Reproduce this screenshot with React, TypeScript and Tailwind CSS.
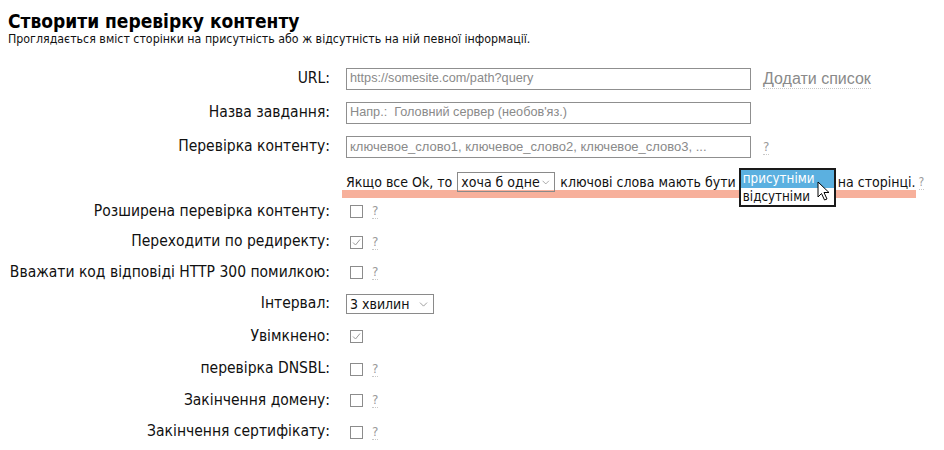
import { ChevronDown } from 'lucide-react'

const labelFont = { fontFamily: '"DejaVu Sans", Verdana, sans-serif' }

function Help() {
  return (
    <span className="ml-[9px] text-[12px] text-[#9a9a9a] border-b border-dotted border-[#c8c8c8] leading-[14px] cursor-help">?</span>
  )
}

function Check({ checked = false }: { checked?: boolean }) {
  return (
    <span className="ml-[4px] w-[13px] h-[13px] border border-[#8c8c8c] bg-white flex items-center justify-center">
      {checked && (
        <svg width="9" height="9" viewBox="0 0 9 9">
          <path d="M1 4.5 L3.5 7 L8 1.5" fill="none" stroke="#9a9a9a" strokeWidth="1" />
        </svg>
      )}
    </span>
  )
}

function Row({ label, children, h = 'h-[31px]' }: { label: string; children?: React.ReactNode; h?: string }) {
  return (
    <div className={`flex items-center ${h}`}>
      <div className="w-[334px] text-right pr-[4px] text-[15.5px] font-stretch-condensed text-[#111]">{label}</div>
      <div className="flex items-center pl-[12px]">{children}</div>
    </div>
  )
}

function TextInput({ placeholder, size = 'text-[12.7px]' }: { placeholder: string; size?: string }) {
  return (
    <div
      className={`w-[405px] h-[22px] border border-[#8f8f8f] px-[3px] flex items-center ${size} text-[#8a8a8a] whitespace-pre`}
      style={{ fontFamily: '"Liberation Sans", Arial, sans-serif' }}
    >
      {placeholder}
    </div>
  )
}

function Cursor() {
  return (
    <svg width="14" height="21" viewBox="0 0 14 21" className="absolute left-[78px] top-[9px]">
      <path d="M1 1 L1 16 L4.5 12.5 L7.5 19 L10 18 L7 11.5 L12 11.5 Z" fill="#fff" stroke="#000" strokeWidth="1" strokeLinejoin="round" />
    </svg>
  )
}

export default function App() {
  return (
    <div className="w-[944px] h-[450px] bg-white overflow-hidden text-[#111]" style={labelFont}>
      <div className="px-[8px] pt-[10px]">
        <h1 className="text-[19px] font-bold font-stretch-condensed leading-[22px] text-black">Створити перевірку контенту</h1>
        <p className="text-[12.3px] font-stretch-condensed leading-[14px] text-[#111]">
          Проглядається вміст сторінки на присутність або ж відсутність на ній певної інформації.
        </p>
      </div>

      <div className="mt-[16px]">
        <Row label="URL:" h="h-[34px]">
          <TextInput placeholder="https://somesite.com/path?query" />
          <span
            className="ml-[12px] text-[16px] text-[#8a8a8a] border-b border-dotted border-[#c8c8c8] leading-[18px]"
            style={{ fontFamily: '"Liberation Sans", Arial, sans-serif' }}
          >
            Додати список
          </span>
        </Row>
        <Row label="Назва завдання:" h="h-[34px]">
          <TextInput placeholder="Напр.:  Головний сервер (необов'яз.)" />
        </Row>
        <Row label="Перевірка контенту:" h="h-[34px]">
          <TextInput placeholder="ключевое_слово1, ключевое_слово2, ключевое_слово3, ..." size="text-[13px]" />
          <span className="ml-[12px] text-[12px] text-[#9a9a9a] border-b border-dotted border-[#c8c8c8] leading-[14px]">?</span>
        </Row>

        <div className="flex">
          <div className="w-[342px] shrink-0" />
          <div className="w-[574px] shrink-0 border-b-[8px] border-[#f7b09b]">
            <div className="flex items-center h-[16px] mt-[10px] pl-[4px] text-[14px] font-stretch-condensed text-[#111] whitespace-nowrap">
              <span className="shrink-0">Якщо все Ok, то</span>
              <span className="shrink-0 ml-[5px] h-[20px] w-[98px] border border-[#8a8a8a] flex items-center justify-between px-[3px] text-[14px]">
                хоча б одне
                <ChevronDown className="w-[13px] h-[13px] text-[#777]" strokeWidth={1.3} />
              </span>
              <span className="shrink-0 ml-[5px]">ключові слова мають бути</span>
              <span className="shrink-0 relative ml-[3px] w-[97px] h-[20px]">
                <span className="absolute left-0 top-[-4px] w-[97px] border-2 border-[#1a1a1a] bg-white z-10 text-[13.3px]">
                  <span className="block bg-[#5bb0e0] text-white h-[18px] leading-[18px] pl-[2px]">присутніми</span>
                  <span className="block h-[17px] leading-[17px] pl-[2px] text-[#111]">відсутніми</span>
                </span>
                <span className="absolute z-20 left-0 top-0">
                  <Cursor />
                </span>
              </span>
              <span className="shrink-0 ml-[2px]">на сторінці.</span>
              <span className="shrink-0 ml-[3px] text-[12px] text-[#9a9a9a] border-b border-dotted border-[#c8c8c8] leading-[14px]">?</span>
            </div>
          </div>
        </div>

        <div className="mt-[-2px]">
          <Row label="Розширена перевірка контенту:">
            <Check />
            <Help />
          </Row>
          <Row label="Переходити по редиректу:" h="h-[30px]">
            <Check checked />
            <Help />
          </Row>
          <Row label="Вважати код відповіді HTTP 300 помилкою:">
            <Check />
            <Help />
          </Row>
          <Row label="Інтервал:" h="h-[32px]">
            <span className="h-[20px] w-[88px] border border-[#8a8a8a] flex items-center justify-between px-[3px] text-[14px] font-stretch-condensed">
              3 хвилин
              <ChevronDown className="w-[13px] h-[13px] text-[#777]" strokeWidth={1.3} />
            </span>
          </Row>
          <Row label="Увімкнено:" h="h-[33px]">
            <Check checked />
          </Row>
          <Row label="перевірка DNSBL:" h="h-[32px]">
            <Check />
            <Help />
          </Row>
          <Row label="Закінчення домену:" h="h-[31px]">
            <Check />
            <Help />
          </Row>
          <Row label="Закінчення сертифікату:" h="h-[32px]">
            <Check />
            <Help />
          </Row>
        </div>
      </div>
    </div>
  )
}
